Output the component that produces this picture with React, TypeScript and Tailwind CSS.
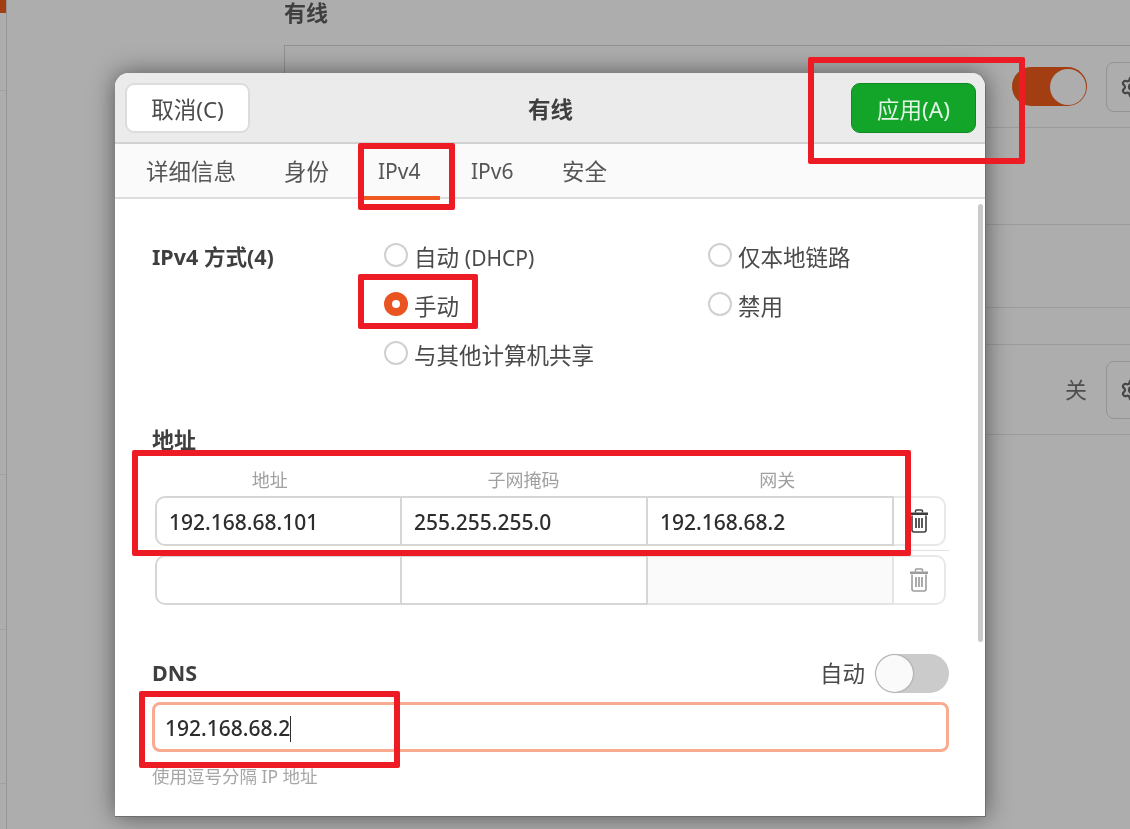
import type { ReactNode } from "react";
import { Settings } from "lucide-react";

function Trash({ muted = false }: { muted?: boolean }) {
  const c = muted ? "#9c9c9c" : "#3d3d3d";
  return (
    <svg width="20" height="24" viewBox="0 0 20 24" fill="none">
      <path d="M6.5 3.5V2a1 1 0 0 1 1-1h5a1 1 0 0 1 1 1v1.5" stroke={c} strokeWidth="1.5" />
      <path d="M1 3.5h18V6H1z" fill={c} />
      <path d="M3 6.5V21a2 2 0 0 0 2 2h10a2 2 0 0 0 2-2V6.5" stroke={c} strokeWidth="1.6" />
      <path d="M7 9v10M10 9v10M13 9v10" stroke={c} strokeWidth="1.7" />
    </svg>
  );
}

function Radio({ label, checked = false }: { label: ReactNode; checked?: boolean }) {
  return (
    <div className="flex h-[49px] items-center">
      {checked ? (
        <span className="flex h-[24px] w-[24px] items-center justify-center rounded-full bg-[#e95420]">
          <span className="h-[8px] w-[8px] rounded-full bg-white" />
        </span>
      ) : (
        <span className="h-[24px] w-[24px] rounded-full border-2 border-[#d0d0d0] bg-white" />
      )}
      <span className="ml-[6px] mt-[7px] text-[22.5px] leading-[30px] text-[#4a4a4a]">{label}</span>
    </div>
  );
}

function Cell({ value, first = false, dim = false }: { value?: string; first?: boolean; dim?: boolean }) {
  return (
    <div
      className={
        "flex items-center border-y-2 border-r-2 pl-[12px] pt-[3px] text-[21px] font-medium text-[#2d2d2d] " +
        (first ? "rounded-l-[10px] border-l-2 " : "") +
        (dim ? "border-[#e4e4e4] bg-[#fafafa]" : "border-[#d6d6d6] bg-white")
      }
    >
      {value}
    </div>
  );
}

function AddressRow({ values, muted = false }: { values: string[]; muted?: boolean }) {
  return (
    <div className="grid h-[50px] w-[791px] grid-cols-[247px_246px_246px_52px]">
      <Cell value={values[0]} first />
      <Cell value={values[1]} />
      <Cell value={values[2]} dim={muted} />
      <div className="flex items-center justify-center rounded-r-[10px] border-y-2 border-r-2 border-[#e8e8e8] bg-white">
        <Trash muted={muted} />
      </div>
    </div>
  );
}

function Mark({ className }: { className: string }) {
  return <div className={"pointer-events-none absolute rounded-[2px] border-[6px] border-[#ed1c24] " + className} />;
}

export default function App() {
  return (
    <div className="relative h-[829px] w-[1130px] overflow-hidden bg-[#adadad] blur-[0.4px] [font-family:'Noto_Sans','Noto_Sans_CJK_SC',sans-serif]">
      {/* window behind the dialog */}
      <div className="flex h-full">
        <aside className="h-full w-[7px] shrink-0 border-r border-[#969696]">
          <div className="h-[13px] bg-[#a33e12]" />
          <div className="h-[78px] border-b border-[#a0a0a0]" />
          <div className="h-[384px] border-b border-[#a0a0a0]" />
          <div className="h-[155px] border-b border-[#a0a0a0]" />
          <div className="h-[154px] border-b border-[#a0a0a0]" />
        </aside>
        <main className="ml-[277px] min-w-0 flex-1">
          <h2 className="h-[45px] pt-[1px] text-[22px] font-bold leading-[22px] text-[#3f3f3f]">有线</h2>
          <div className="border-l border-t border-[#919191]">
            <div className="flex h-[82px] items-center justify-end border-b border-[#9b9b9b]">
              <div className="mr-[19px] flex h-[39px] w-[75px] items-center justify-end rounded-full bg-[#a33e12] pr-[1px]">
                <span className="h-[36px] w-[36px] rounded-full bg-[#adadad]" />
              </div>
              <div className="-mr-[24px] flex h-[50px] w-[48px] items-center justify-start rounded-[8px] border border-[#939393] pl-[13px]">
                <Settings size={24} strokeWidth={2.2} color="#454545" className="shrink-0" />
              </div>
            </div>
            <div className="h-[97px] border-b border-[#9b9b9b]" />
            <div className="h-[83px] border-b border-[#9b9b9b]" />
            <div className="h-[37px] border-b border-[#9b9b9b]" />
            <div className="flex h-[90px] items-center justify-end border-b border-[#9b9b9b]">
              <span className="mr-[19px] text-[22px] text-[#4d4d4d]">关</span>
              <div className="-mr-[24px] flex h-[58px] w-[48px] items-center justify-start rounded-[8px] border border-[#939393] pl-[13px]">
                <Settings size={24} strokeWidth={2.2} color="#454545" className="shrink-0" />
              </div>
            </div>
          </div>
        </main>
      </div>

      {/* dialog */}
      <section className="absolute left-[115px] top-[73px] h-[744px] w-[871px] overflow-hidden rounded-t-[14px] border-r border-b border-[#6e6e6e] bg-white shadow-[0_0_24px_rgba(0,0,0,0.5)]">
        <header className="flex h-[71px] items-start justify-between border-b-2 border-[#d2d2d2] bg-[#ebebeb] pl-[10px] pr-[9px] pt-[10px]">
          <button className="h-[50px] w-[125px] rounded-[9px] border-2 border-[#dcdcdc] bg-white pt-[3px] text-[22.5px] text-[#4a4a4a]">取消(C)</button>
          <span className="mt-[10px] text-[22.5px] font-bold leading-[34px] text-[#3f3f3f]">有线</span>
          <button className="h-[50px] w-[125px] rounded-[9px] border border-[#0f8a22] bg-[#13a52a] pt-[3px] text-[22.5px] text-[#e3f5e6]">应用(A)</button>
        </header>
        <nav className="flex h-[55px] items-center border-b-2 border-[#dddddd] bg-[#fafafa] pl-[31px] pt-[2px] text-[22.5px] text-[#555555]">
          <span className="w-[138px]">详细信息</span>
          <span className="w-[94px]">身份</span>
          <span className="relative w-[93px] text-[21px]">
            IPv4
            <span className="absolute -bottom-[13px] -left-[16px] h-[4px] w-[78px] bg-[#f05a22]" />
          </span>
          <span className="w-[91px] text-[21px]">IPv6</span>
          <span>安全</span>
        </nav>
        <div className="relative pl-[37px] pr-[36px] pt-[31px]">
          <div className="absolute right-[2px] top-[5px] h-[438px] w-[5px] rounded-full bg-[#cacaca]" />
          <div className="flex">
            <div className="w-[232px] pt-[12px] text-[21.5px] font-bold leading-[30px] text-[#3f3f3f]">IPv4 方式(4)</div>
            <div className="w-[324px]">
              <Radio
                label={
                  <>
                    自动 <span className="text-[21px]">(DHCP)</span>
                  </>
                }
              />
              <Radio label="手动" checked />
              <Radio label="与其他计算机共享" />
            </div>
            <div>
              <Radio label="仅本地链路" />
              <Radio label="禁用" />
            </div>
          </div>
          <h3 className="mt-[47px] text-[22px] font-bold leading-[30px] text-[#3f3f3f]">地址</h3>
          <div className="-ml-[9px] mt-[14px] grid h-[28px] w-[761px] grid-cols-3 text-center text-[18px] leading-[24px] text-[#a0a0a0]">
            <span>地址</span>
            <span>子网掩码</span>
            <span>网关</span>
          </div>
          <div className="ml-[3px]">
            <AddressRow values={["192.168.68.101", "255.255.255.0", "192.168.68.2"]} />
            <div className="flex h-[9px] items-center">
              <div className="h-[1px] w-[794px] bg-[#e2e2e2]" />
            </div>
            <AddressRow values={["", "", ""]} muted />
          </div>
          <div className="mt-[49px] flex h-[39px] items-center justify-between">
            <span className="text-[21.5px] font-bold text-[#3f3f3f]">DNS</span>
            <div className="flex items-center gap-[10px]">
              <span className="text-[22.5px] text-[#4a4a4a]">自动</span>
              <div className="flex h-[39px] w-[74px] items-center rounded-full bg-[#cbcbcb] pl-[1px]">
                <span className="h-[37px] w-[37px] rounded-full bg-[#fafafa] shadow-[0_0_2px_rgba(0,0,0,0.45)]" />
              </div>
            </div>
          </div>
          <div className="mt-[9px] flex h-[50px] items-center rounded-[8px] border-[3px] border-[#f9ab92] pl-[10px] pt-[3px] text-[21px] font-medium text-[#2d2d2d]">
            192.168.68.2
            <span className="h-[26px] w-[1px] bg-[#2d2d2d]" />
          </div>
          <p className="mt-[11px] text-[17.5px] leading-[26px] text-[#a6a6a6]">使用逗号分隔 IP 地址</p>
        </div>
      </section>

      {/* red annotation boxes drawn over the screenshot */}
      <Mark className="left-[808px] top-[57px] h-[107px] w-[217px]" />
      <Mark className="left-[358px] top-[143px] h-[67px] w-[97px]" />
      <Mark className="left-[358px] top-[274px] h-[55px] w-[120px]" />
      <Mark className="left-[132px] top-[450px] h-[106px] w-[779px]" />
      <Mark className="left-[139px] top-[691px] h-[77px] w-[261px]" />
    </div>
  );
}
